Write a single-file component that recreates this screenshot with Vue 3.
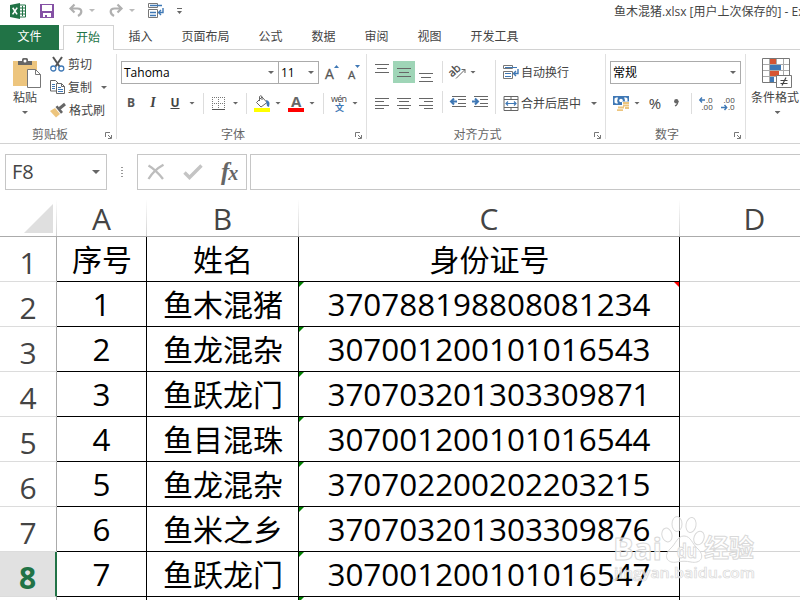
<template>
  <div class="excel">
    <!-- TITLE BAR -->
    <header class="title-bar">
      <div class="quick-access">
        <svg width="16" height="16" viewBox="0 0 16 16">
          <path d="M9 2h6.5v12H9z" fill="#fff" stroke="#217346" />
          <path d="M10 5h5M10 8h5M10 11h5M12.5 3v10" stroke="#217346" fill="none" />
          <path d="M0 2l10-2v16L0 14z" fill="#217346" />
          <path d="M2.7 4.8l4.4 6.6M7.2 4.6L2.6 11.4" stroke="#fff" stroke-width="1.6" />
        </svg>
        <svg width="14" height="14" viewBox="0 0 14 14">
          <path d="M0 0h14v14H0z" fill="#8551a5" />
          <path d="M2 1h10v6H2zM3 9h8v4H7v-2H5v2H3z" fill="#fff" />
        </svg>
        <svg width="14" height="13" viewBox="0 0 14 13">
          <path d="M1 4.5h7.500c5 0 5 5 .5 7.500M5.500 .5L1.500 4.500l4 4" fill="none" stroke="#b0b0b0" stroke-width="2.200" />
        </svg>
        <i class="caret faded"></i>
        <svg width="14" height="13" viewBox="0 0 14 13">
          <path d="M13 4.500H5.500c-5 0-5 5-.5 7.500M8.500 .5l4 4-4 4" fill="none" stroke="#b0b0b0" stroke-width="2.200" />
        </svg>
        <i class="caret faded"></i>
        <svg width="16" height="16" viewBox="0 0 16 16">
          <path d="M.5 .5h9v4h-9zM.5 6.500h9v8h-9z" fill="#fff" stroke="#777" />
          <path d="M2 2.500h12M2 9.500h6M2 12.500h6" stroke="#3f78b5" stroke-width="1.300" />
          <path d="M15 5v4.500h-4M13 7l-2.500 2.500L13 12" fill="none" stroke="#3f78b5" stroke-width="1.400" />
        </svg>
        <svg width="5" height="6" viewBox="0 0 5 6">
          <path d="M0 .5h5" stroke="#666" />
          <path d="M0 3h5L2.500 6z" fill="#666" />
        </svg>
      </div>
      <div class="doc-name">鱼木混猪.xlsx [用户上次保存的] - Excel</div>
    </header>

    <!-- TABS -->
    <nav class="tabs">
      <span class="file">文件</span>
      <span v-for="tab in tabs" :key="tab" :class="['tab', { active: tab === activeTab }]">{{ tab }}</span>
    </nav>

    <!-- RIBBON -->
    <section class="ribbon">
      <div class="group clipboard">
        <div class="body">
          <div class="big-button">
            <svg width="29" height="31" viewBox="0 0 29 31">
              <path d="M0 3h24v25H0z" fill="#edc57e" />
              <path d="M5 7V3h4V1.500Q9 0 10.500 0h3Q15 0 15 1.500V3h4v4z" fill="#666" />
              <circle cx="12" cy="3" r="1.500" fill="#fff" />
              <path d="M14.500 11.500h8l5 5v13h-13z" fill="#fff" stroke="#777" />
              <path d="M22.500 11.500v5h5" fill="none" stroke="#777" />
            </svg>
            <span>粘贴</span>
            <i class="caret"></i>
          </div>
          <div class="actions">
            <div class="action">
              <svg width="15" height="15" viewBox="0 0 15 15">
                <path d="M3 0l6.500 9.500M12 0L5.500 9.500" stroke="#555" stroke-width="2" />
                <circle cx="3.300" cy="11.500" r="2.500" fill="none" stroke="#3f78b5" stroke-width="1.300" />
                <circle cx="11.300" cy="11.500" r="2.500" fill="none" stroke="#3f78b5" stroke-width="1.300" />
              </svg>
              <span>剪切</span>
            </div>
            <div class="action">
              <svg width="15" height="15" viewBox="0 0 15 15">
                <path d="M.5 .5h5l2.500 2.500v8H.5z" fill="#fff" stroke="#666" />
                <path d="M2 4.500h3M2 6.500h3M2 8.500h3" stroke="#3f78b5" />
                <path d="M6.500 3.500h5l3 3v7h-8z" fill="#fff" stroke="#666" />
                <path d="M11.500 3.500v3h3" fill="none" stroke="#666" />
                <path d="M8 7.500h3M8 9.500h5M8 11.500h5" stroke="#3f78b5" />
              </svg>
              <span>复制</span>
              <i class="caret"></i>
            </div>
            <div class="action">
              <svg width="16" height="15" viewBox="0 0 16 15">
                <path d="M0 8l5-3 5 6-4 3.500z" fill="#edc57e" />
                <path d="M5.500 4l2-1.500L13 9l-2 1.800z" fill="#666" />
                <path d="M9.500 5.500L15 1" stroke="#666" stroke-width="3" />
              </svg>
              <span>格式刷</span>
            </div>
          </div>
        </div>
        <div class="group-label">剪贴板</div>
        <svg class="launcher" width="7" height="7" viewBox="0 0 7 7"><path :d="launcher" fill="none" stroke="#777" /></svg>
      </div>

      <div class="group font">
        <div class="font-row">
          <div class="combo">Tahoma<i class="caret"></i></div>
          <div class="combo size">11<i class="caret"></i></div>
          <svg width="14" height="16" viewBox="0 0 14 16">
            <text x="-1" y="14" font-size="14" fill="#555" stroke="#555" stroke-width=".3">A</text>
            <path d="M8 3h5l-2.500-3z" fill="#3f78b5" />
          </svg>
          <svg width="14" height="16" viewBox="0 0 14 16">
            <text x="0" y="14" font-size="11.500" fill="#555" stroke="#555" stroke-width=".3">A</text>
            <path d="M7 0h5L9.500 3z" fill="#3f78b5" />
          </svg>
        </div>
        <div class="format-row">
          <b>B</b>
          <em>I</em>
          <u>U</u>
          <i class="caret"></i>
          <i class="divider"></i>
          <svg width="13" height="13" viewBox="0 0 13 13">
            <path d="M.5 0v12M6.500 0v12M12.500 0v12M0 .5h13M0 6.500h13" stroke="#777" stroke-dasharray="1 1" />
            <path d="M0 12.500h13" stroke="#555" />
          </svg>
          <i class="caret"></i>
          <i class="divider"></i>
          <svg width="16" height="17" viewBox="0 0 16 17">
            <path d="M2.500 7.500L8 2l5 5.500-6 4.500z" fill="#fff" stroke="#666" />
            <path d="M5.500 6V1.500q1-1.500 2.500 0V5" fill="none" stroke="#666" />
            <path d="M12 5q5 1 3 7l-2-1z" fill="#3f78b5" />
            <path d="M0 13h16v4H0z" fill="#ff0" />
          </svg>
          <i class="caret"></i>
          <svg width="16" height="17" viewBox="0 0 16 17">
            <text x="3" y="12" font-size="15" font-weight="700" fill="#666">A</text>
            <path d="M0 13h16v4H0z" fill="#f00" />
          </svg>
          <i class="caret"></i>
          <i class="divider"></i>
          <svg width="17" height="18" viewBox="0 0 17 18">
            <text x="0" y="8" font-size="9" fill="#444" textLength="16">wén</text>
            <text x="4" y="17" font-size="9" font-weight="700" fill="#3f78b5">文</text>
          </svg>
          <i class="caret"></i>
        </div>
        <div class="group-label">字体</div>
        <svg class="launcher" width="7" height="7" viewBox="0 0 7 7"><path :d="launcher" fill="none" stroke="#777" /></svg>
      </div>

      <div class="group align">
        <div class="align-body">
          <div class="align-tools">
            <span v-for="item in alignIcons" :key="item.name" :class="['tool', { selected: item.selected }]">
              <svg width="14" height="22" viewBox="0 0 14 22"><path :d="item.d" stroke="#666" /></svg>
            </span>
          </div>
          <div class="indent-tools">
            <div class="indent-row">
              <svg width="17" height="16" viewBox="0 0 17 16">
                <text x="-1" y="10" font-size="11" fill="#444" stroke="#444" stroke-width=".3" transform="rotate(-42 5 8)">ab</text>
                <path d="M6 14.500l9-9M11.500 5.500H15V9" fill="none" stroke="#666" />
              </svg>
              <i class="caret"></i>
            </div>
            <div class="indent-row">
              <svg width="16" height="12" viewBox="0 0 16 12">
                <path d="M2 .5h14M8 3.500h8M8 7.500h8M2 10.500h14" stroke="#666" />
                <path d="M7 5.500H1M4 2.500l-3 3 3 3" fill="none" stroke="#3f78b5" stroke-width="2" />
              </svg>
              <svg width="16" height="12" viewBox="0 0 16 12">
                <path d="M2 .5h14M8 3.500h8M8 7.500h8M2 10.500h14" stroke="#666" />
                <path d="M0 5.500h6M3 2.500l3 3-3 3" fill="none" stroke="#3f78b5" stroke-width="2" />
              </svg>
            </div>
          </div>
          <div class="merge-tools">
            <div class="action">
              <svg width="16" height="15" viewBox="0 0 16 15">
                <path d="M.5 .5h9v3h-9zM.5 6.500h9v7h-9z" fill="#fff" stroke="#777" />
                <path d="M2 2.500h12M2 8.500h6M2 11.500h6" stroke="#3f78b5" />
                <path d="M15 4v4.500h-4M13 6l-2.500 2.500L13 11" fill="none" stroke="#3f78b5" stroke-width="1.400" />
              </svg>
              <span>自动换行</span>
            </div>
            <div class="action">
              <svg width="15" height="15" viewBox="0 0 15 15">
                <path d="M.5 .5h14v14H.5zM.5 3.500h14M.5 11.500h14M7.500 0v3.500M7.500 11.500V15" fill="none" stroke="#666" />
                <path d="M2.500 7.500h10M4.500 5.500l-2 2 2 2M10.500 5.500l2 2-2 2" fill="none" stroke="#3f78b5" stroke-width="1.200" />
              </svg>
              <span>合并后居中</span>
              <i class="caret"></i>
            </div>
          </div>
        </div>
        <div class="group-label">对齐方式</div>
        <svg class="launcher" width="7" height="7" viewBox="0 0 7 7"><path :d="launcher" fill="none" stroke="#777" /></svg>
      </div>

      <div class="group number">
        <div class="combo">常规<i class="caret"></i></div>
        <div class="number-row">
          <svg width="16" height="17" viewBox="0 0 16 17">
            <path d="M0 1h16v9H0z" fill="#3f78b5" />
            <path d="M1.500 3.500L3 2.500h2Q3.500 5.500 5 8.500H3l-1.500-1zM14.500 3.500l-1.500-1h-2q1 1.500 1 4h2.500z" fill="#fff" />
            <circle cx="8" cy="5.500" r="1.800" fill="#fff" />
            <path d="M9 6.500h7v7h-5V17H3v-5.500h6z" fill="#fff" />
            <path d="M10 8h6M10 10.500h6M5 12.500h6M4 15.200h6M12 13h4" stroke="#edc57e" stroke-width="1.800" />
          </svg>
          <i class="caret"></i>
          <span class="percent">%</span>
          <svg width="5" height="8" viewBox="0 0 5 8">
            <circle cx="2.300" cy="2.300" r="2.200" fill="#666" />
            <path d="M3.800 2Q4 5.500 1 7" fill="none" stroke="#666" stroke-width="1.300" />
          </svg>
          <i class="divider"></i>
          <svg width="16" height="15" viewBox="0 0 16 15">
            <text x="7" y="6.500" font-size="8" fill="#444">.0</text>
            <text x="2.500" y="14" font-size="8" fill="#444">.00</text>
            <path d="M6 4H1M3 1.500L.800 4 3 6.500" fill="none" stroke="#3f78b5" stroke-width="1.400" />
          </svg>
          <svg width="16" height="15" viewBox="0 0 16 15">
            <text x="2.500" y="6.500" font-size="8" fill="#444">.00</text>
            <text x="7" y="14" font-size="8" fill="#444">.0</text>
            <path d="M0 11.500h5.500M3.500 9l2.200 2.500L3.500 14" fill="none" stroke="#3f78b5" stroke-width="1.400" />
          </svg>
        </div>
        <div class="group-label">数字</div>
        <svg class="launcher" width="7" height="7" viewBox="0 0 7 7"><path :d="launcher" fill="none" stroke="#777" /></svg>
      </div>

      <div class="group styles">
        <div class="big-button">
          <svg width="30" height="30" viewBox="0 0 30 30">
            <path d="M.5 .5h27v24H.5z" fill="#fff" stroke="#777" />
            <path d="M7.500 1v23M14.500 1v23M21.500 1v23M1 6.500h26M1 12.500h26M1 18.500h26" stroke="#aaa" />
            <path d="M8 1h6v5H8zM8 13h9v5H8z" fill="#d65532" />
            <path d="M8 7h11v5H8zM8 19h4v5H8z" fill="#3f78b5" />
            <path d="M14.500 17.500h15v12h-15z" fill="#fff" stroke="#777" />
            <path d="M18.500 22.500h7M18.500 25.500h7M24 19.500l-4 8" stroke="#444" stroke-width="1.200" />
          </svg>
          <span>条件格式</span>
          <i class="caret"></i>
        </div>
      </div>
    </section>

    <!-- FORMULA BAR -->
    <section class="formula-bar">
      <div class="name-box">F8<i class="caret"></i></div>
      <div class="dots"><i></i><i></i><i></i><i></i></div>
      <div class="formula-buttons">
        <svg width="18" height="16" viewBox="0 0 18 16">
          <path d="M1.500 1.500Q9 6 16 15M16.500 .800Q7 6 1.500 15" fill="none" stroke="#bdbdbd" stroke-width="2.300" />
        </svg>
        <svg width="20" height="16" viewBox="0 0 20 16">
          <path d="M1.500 8.500l5 5L18.500 1.500" fill="none" stroke="#c4c4c4" stroke-width="3.400" />
        </svg>
        <span class="fx">f<small>x</small></span>
      </div>
      <div class="formula-input"></div>
    </section>

    <!-- SHEET -->
    <section class="sheet">
      <div class="row head">
        <div class="corner">
          <svg width="29" height="29" viewBox="0 0 29 29"><path d="M29 0v29H0z" fill="#dfdfdf" /></svg>
        </div>
        <div v-for="col in columns" :key="col">{{ col }}</div>
      </div>
      <div v-for="(row, index) in rows" :key="index" class="row">
        <div :class="['row-number', { current: index === 7 }]">{{ row.id === undefined ? '' : index + 1 }}</div>
        <div :class="['cell', { chinese: index === 0 }]">{{ row.no }}</div>
        <div class="cell chinese">{{ row.name }}</div>
        <div :class="['cell', { chinese: index === 0, flagged: index > 0, noted: index === 1 }]">{{ row.id }}</div>
        <div class="cell empty"></div>
      </div>
    </section>

    <!-- WATERMARK -->
    <svg class="watermark" width="150" height="74" viewBox="0 0 150 74">
      <g fill="#fff" fill-opacity=".7" stroke="#d9d9d9" stroke-width="1">
        <ellipse cx="57" cy="25" rx="5" ry="7" transform="rotate(-15 57 25)" />
        <ellipse cx="67" cy="14" rx="5" ry="7.500" />
        <ellipse cx="81" cy="15" rx="5" ry="7.500" transform="rotate(10 81 15)" />
        <ellipse cx="89" cy="28" rx="5" ry="7" transform="rotate(20 89 28)" />
        <path d="M74 26c7 0 8 8 14 13 8 8 2 15-7 13-5-1-9-1-14 0-10 2-14-6-7-13 6-5 7-13 14-13z" />
        <text x="3" y="50" font-size="31" font-weight="700" textLength="49" lengthAdjust="spacingAndGlyphs">Bai</text>
        <text x="67" y="48" font-size="19" font-weight="700" textLength="20" lengthAdjust="spacingAndGlyphs">du</text>
        <text x="94" y="47" font-size="25" font-weight="700" textLength="50" lengthAdjust="spacingAndGlyphs">经验</text>
        <text x="4" y="68" font-size="15" font-weight="600" stroke-width=".7" textLength="141" lengthAdjust="spacingAndGlyphs">jingyan.baidu.com</text>
      </g>
    </svg>
  </div>
</template>

<script setup>
import { ref } from 'vue'

const tabs = ['开始', '插入', '页面布局', '公式', '数据', '审阅', '视图', '开发工具']
const activeTab = ref('开始')

const launcher = 'M.5 5V.5H5M3 3l3 3M6.500 3v3.500H3'

const alignIcons = [
  { name: 'top', d: 'M0 3.500h14M2 7.500h10M0 11.500h14' },
  { name: 'middle', d: 'M0 7.500h14M2 11.500h10M0 15.500h14', selected: true },
  { name: 'bottom', d: 'M0 12.500h14M2 16.500h10M0 20.500h14' },
  { name: 'left', d: 'M0 6.500h14M0 9.500h9M0 13.500h14M0 16.500h9' },
  { name: 'center', d: 'M0 6.500h14M2 9.500h10M0 13.500h14M2 16.500h10' },
  { name: 'right', d: 'M0 6.500h14M5 9.500h9M0 13.500h14M5 16.500h9' },
]

const columns = ['A', 'B', 'C', 'D']

const rows = ref([
  { no: '序号', name: '姓名', id: '身份证号' },
  { no: '1', name: '鱼木混猪', id: '370788198808081234' },
  { no: '2', name: '鱼龙混杂', id: '307001200101016543' },
  { no: '3', name: '鱼跃龙门', id: '370703201303309871' },
  { no: '4', name: '鱼目混珠', id: '307001200101016544' },
  { no: '5', name: '鱼龙混杂', id: '370702200202203215' },
  { no: '6', name: '鱼米之乡', id: '370703201303309876' },
  { no: '7', name: '鱼跃龙门', id: '307001200101016547' },
  {},
])
</script>

<style>
body {
  margin: 0;
  overflow: hidden;
}
</style>

<style scoped>
.excel {
  position: relative;
  width: 800px;
  height: 600px;
  overflow: hidden;
  background: #fff;
  color: #444;
  font: 12px/16px "Open Sans", "Noto Sans CJK SC", sans-serif;
  white-space: nowrap;
}

.excel * {
  box-sizing: border-box;
}

svg {
  display: block;
  flex: none;
  overflow: visible;
}

.caret {
  width: 6px;
  height: 3px;
  flex: none;
  background: #666;
  clip-path: polygon(0 0, 100% 0, 50% 100%);
}

.caret.faded {
  background: #bbb;
}

.divider {
  width: 1px;
  height: 21px;
  background: #ddd;
}

/* TITLE BAR */
.title-bar {
  display: flex;
  justify-content: space-between;
  height: 25px;
}

.quick-access {
  display: grid;
  grid-template-columns: 30px 29px 20px 20px 20px 19px 29px 6px;
  align-items: center;
  height: 21px;
  padding-left: 10px;
}

.doc-name {
  width: 186px;
  padding-top: 4px;
  overflow: hidden;
}

/* TABS */
.tabs {
  display: flex;
  height: 25px;
  line-height: 24px;
  border-bottom: 1px solid #d2d2d2;
}

.file {
  width: 59px;
  height: 25px;
  margin-right: 4px;
  color: #fff;
  background: #217346;
  text-align: center;
}

.tab {
  padding: 0 14.5px;
}

.tab.active {
  width: 51px;
  height: 25px;
  padding: 0 12px;
  color: #217346;
  background: #fff;
  border: 1px solid #d2d2d2;
  border-bottom: 0;
  line-height: 23px;
}

/* RIBBON */
.ribbon {
  display: flex;
  height: 94px;
  padding-top: 4px;
  border-bottom: 1px solid #d2d2d2;
}

.group {
  position: relative;
  flex: none;
  display: flex;
  flex-direction: column;
  height: 85px;
  border-right: 1px solid #e0e0e0;
}

.clipboard {
  width: 117px;
}

.font {
  width: 250px;
  padding: 7px 0 0 4px;
}

.align {
  width: 239px;
  padding: 6px 0 0 4px;
}

.number {
  width: 140px;
  padding: 7px 0 0 4px;
}

.styles {
  width: 60px;
  padding-left: 3px;
  border: 0;
}

.group-label {
  margin-top: auto;
  padding-right: 21px;
  color: #666;
  line-height: 9px;
  text-align: center;
}

.clipboard .group-label {
  padding-right: 16px;
}

.launcher {
  position: absolute;
  right: 4px;
  bottom: 0;
}

.body {
  display: flex;
}

.big-button {
  display: flex;
  flex-direction: column;
  align-items: center;
  width: 52px;
  padding-top: 4px;
}

.big-button .caret {
  margin-top: 5px;
}

.clipboard .big-button {
  width: 50px;
}

.clipboard .big-button svg {
  margin: 0 0 1px 4px;
}

.styles .big-button span {
  margin-top: 2px;
}

.styles .big-button svg {
  margin-left: 3px;
}

.styles .big-button .caret {
  margin: 5px 0 0 5px;
}

.action {
  display: flex;
  align-items: center;
  height: 23px;
}

.action span {
  margin-left: 3px;
}

.actions {
  margin-top: -1px;
}

.actions .caret {
  margin-left: 9px;
}

.combo {
  display: flex;
  align-items: center;
  justify-content: space-between;
  flex: none;
  width: 158px;
  height: 23px;
  padding: 0 4px 0 2px;
  border: 1px solid #ababab;
  color: #000;
}

.combo.size {
  width: 41px;
  margin-left: -1px;
}

.number .combo {
  width: 131px;
}

.font-row {
  display: flex;
  align-items: center;
}

.font-row svg {
  margin-left: 7px;
}

.font-row svg + svg {
  margin-left: 8px;
}

.format-row {
  display: grid;
  grid-template-columns: 20px 24px 20px 14px 8px 23px 11px 11px 20px 12px 24px 8px 14px 18px 14px;
  align-items: center;
  justify-items: center;
  height: 22px;
  margin-top: 8px;
}

.format-row b {
  color: #555;
}

.format-row em {
  font-family: "Liberation Serif", serif;
  font-size: 14px;
  font-weight: 700;
}

.format-row u {
  font-weight: 700;
}

.align-body {
  display: flex;
  height: 54px;
}

.align-tools {
  display: grid;
  grid-template-columns: 22px 22px 22px;
  row-gap: 8px;
  width: 71px;
  padding-top: 1px;
}

.tool {
  display: flex;
  justify-content: center;
  height: 22px;
}

.tool.selected {
  background: #9fd5b7;
}

.indent-tools {
  display: flex;
  flex-direction: column;
  gap: 8px;
  padding-top: 1px;
}

.indent-row {
  display: flex;
  align-items: center;
  gap: 6px;
  width: 53px;
  height: 22px;
  padding-left: 7px;
  border-left: 1px solid #ddd;
}

.indent-row .caret {
  margin-left: -3px;
}

.merge-tools {
  padding-left: 7px;
  border-left: 1px solid #ddd;
}

.merge-tools .action {
  height: 25px;
  margin-bottom: 6px;
}

.merge-tools .action svg {
  width: 16px;
}

.merge-tools .action span {
  margin-left: 2px;
}

.merge-tools .caret {
  margin-left: 10px;
}

.number-row {
  display: grid;
  grid-template-columns: 22px 10px 26px 16px 14px 18px 26px;
  align-items: center;
  justify-items: center;
  height: 22px;
  margin-top: 8px;
}

.percent {
  font-size: 15px;
}

/* FORMULA BAR */
.formula-bar {
  display: flex;
  height: 56px;
  padding: 10px 0 10px 5px;
}

.name-box {
  display: flex;
  flex: none;
  align-items: center;
  justify-content: space-between;
  width: 102px;
  border: 1px solid #c6c6c6;
  padding: 0 6px;
  font-size: 20px;
}

.name-box .caret {
  width: 8px;
  height: 4px;
}

.dots {
  display: flex;
  flex: none;
  flex-direction: column;
  align-items: center;
  justify-content: center;
  gap: 2px;
  width: 30px;
}

.dots i {
  width: 2px;
  height: 1px;
  background: #999;
}

.formula-buttons {
  display: flex;
  flex: none;
  align-items: center;
  gap: 18px;
  width: 110px;
  padding-left: 9px;
  border: 1px solid #c6c6c6;
}

.fx {
  font: italic 700 25px/26px "Liberation Serif", serif;
  color: #666;
}

.fx small {
  font-size: 20px;
  margin-left: -1px;
}

.formula-input {
  flex: none;
  width: 560px;
  margin-left: 3px;
  border: 1px solid #c6c6c6;
}

/* SHEET */
.row {
  display: grid;
  grid-template-columns: 57px 90px 152px 381px 150px;
  grid-template-rows: 100%;
  height: 45px;
  font-size: 31.4px;
  line-height: 43px;
  text-align: center;
}

.head {
  height: 37px;
  border-bottom: 1px solid #ababab;
  font-size: 30px;
  line-height: 38px;
}

.head > div {
  border-right: 1px solid;
  border-image: linear-gradient(#fff, #d0d0d0) 1;
}

.corner {
  padding: 4px 0 0 24px;
}

.row-number {
  border-right: 1px solid #ababab;
  border-bottom: 1px solid #dcdcdc;
  font-size: 30px;
  line-height: 52px;
}

.row-number.current {
  border-right: 2px solid #217346;
  background: #e1e1e1;
  color: #217346;
  font-weight: 700;
}

.cell {
  position: relative;
  border-right: 1px solid #000;
  border-bottom: 1px solid #000;
  color: #000;
}

.cell.chinese {
  padding-left: 1px;
  font-family: "Noto Sans CJK SC", sans-serif;
  font-size: 30px;
}

.cell.empty {
  border-color: #d4d4d4;
}

/* number stored as text */
.flagged::before {
  content: '';
  position: absolute;
  top: 0;
  left: 0;
  border-top: 5px solid #008000;
  border-right: 5px solid transparent;
}

/* comment marker */
.noted::after {
  content: '';
  position: absolute;
  top: 0;
  right: 0;
  border-top: 5px solid #f00;
  border-left: 5px solid transparent;
}

/* WATERMARK */
.watermark {
  position: absolute;
  top: 510px;
  left: 610px;
}
</style>
